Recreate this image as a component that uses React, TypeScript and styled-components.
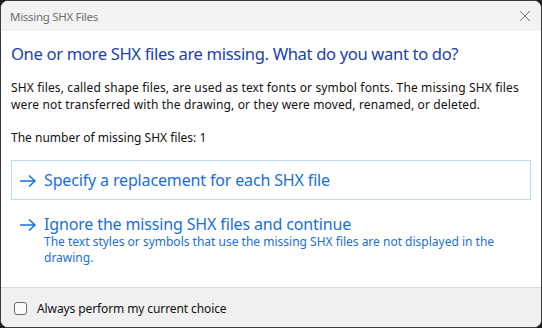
import React from "react";
import styled, { createGlobalStyle } from "styled-components";

const Global = createGlobalStyle`
  html, body { margin: 0; padding: 0; background: #1c1c1c; }
  body { width: 542px; height: 328px; overflow: hidden; }
  * { box-sizing: border-box; }
`;

const FONT = `"Noto Sans", "Open Sans", sans-serif`;

const Window = styled.div`
  width: 542px;
  height: 328px;
  border: 1px solid #3a3a3a;
  border-radius: 8px;
  overflow: hidden;
  display: flex;
  flex-direction: column;
  background: #ffffff;
  font-family: ${FONT};
`;

const TitleBar = styled.div`
  height: 30px;
  flex: none;
  background: #f3f3f3;
  display: flex;
  align-items: center;
  justify-content: space-between;
  padding: 0 9px 0 9px;
`;

const Title = styled.span`
  font-size: 11.5px;
  color: #6e6e6e;
  letter-spacing: -0.3px;
`;

const Close = styled.button`
  border: none;
  background: none;
  padding: 0;
  width: 12px;
  height: 12px;
  margin-right: 1px;
  display: flex;
`;

const Content = styled.div`
  flex: 1;
  padding: 11px 10px 0 10px;
  display: flex;
  flex-direction: column;
`;

const Heading = styled.h1`
  margin: 0;
  font-size: 16.6px;
  font-weight: 400;
  color: #1a3fae;
  line-height: 24px;
  letter-spacing: -0.35px;
`;

const Body = styled.p<{ $top: number; $spacing?: number }>`
  margin: 0;
  font-size: 12px;
  line-height: 17px;
  color: #111;
  letter-spacing: ${(p) => p.$spacing ?? 0}px;
  margin-top: ${(p) => p.$top}px;
`;

const Links = styled.div`
  margin-top: 14px;
  display: flex;
  flex-direction: column;
  gap: 4px;
`;

const LinkBox = styled.div<{ $focused?: boolean }>`
  display: grid;
  grid-template-columns: 32px 1fr;
  padding: 8px 8px 8px 0;
  border: 1px solid ${(p) => (p.$focused ? "#bcdcf3" : "transparent")};
  color: #1a6fd6;
`;

const Arrow = styled.svg`
  width: 18px;
  height: 14px;
  margin: 5px 0 0 7px;
`;

const LinkTitle = styled.div`
  font-size: 16px;
  line-height: 22px;
  letter-spacing: -0.15px;
`;

const LinkNote = styled.div`
  font-size: 12px;
  line-height: 16px;
  letter-spacing: 0;
  margin-top: -1px;
`;

const Footer = styled.div`
  height: 40px;
  flex: none;
  border-top: 1px solid #dcdcdc;
  background: #f0f0f0;
  display: flex;
  align-items: center;
  padding-left: 13px;
  gap: 10px;
`;

const Check = styled.span`
  width: 13px;
  height: 13px;
  border: 1px solid #6a6a6a;
  border-radius: 3px;
  background: #fbfbfb;
  margin-top: 1px;
`;

const CheckLabel = styled.span`
  font-size: 12px;
  color: #111;
  letter-spacing: -0.1px;
  margin-top: 1px;
`;

const ArrowIcon = () => (
  <Arrow viewBox="0 0 18 14" fill="none" stroke="currentColor" strokeWidth="1.5">
    <path d="M1 7h15M10 1.5L16 7l-6 5.5" />
  </Arrow>
);

export default function App() {
  return (
    <>
      <Global />
      <Window>
        <TitleBar>
          <Title>Missing SHX Files</Title>
          <Close aria-label="Close">
            <svg width="12" height="12" viewBox="0 0 12 12" stroke="#7a7a7a" strokeWidth="1">
              <path d="M1 1l10 10M11 1L1 11" />
            </svg>
          </Close>
        </TitleBar>
        <Content>
          <Heading>One or more SHX files are missing. What do you want to do?</Heading>
          <Body $top={13} $spacing={0.14}>
            SHX files, called shape files, are used as text fonts or symbol fonts. The missing SHX files
            were not transferred with the drawing, or they were moved, renamed, or deleted.
          </Body>
          <Body $top={16}>The number of missing SHX files: 1</Body>
          <Links>
            <LinkBox $focused>
              <ArrowIcon />
              <LinkTitle>Specify a replacement for each SHX file</LinkTitle>
            </LinkBox>
            <LinkBox>
              <ArrowIcon />
              <div>
                <LinkTitle>Ignore the missing SHX files and continue</LinkTitle>
                <LinkNote>
                  The text styles or symbols that use the missing SHX files are not displayed in the
                  drawing.
                </LinkNote>
              </div>
            </LinkBox>
          </Links>
        </Content>
        <Footer>
          <Check />
          <CheckLabel>Always perform my current choice</CheckLabel>
        </Footer>
      </Window>
    </>
  );
}
